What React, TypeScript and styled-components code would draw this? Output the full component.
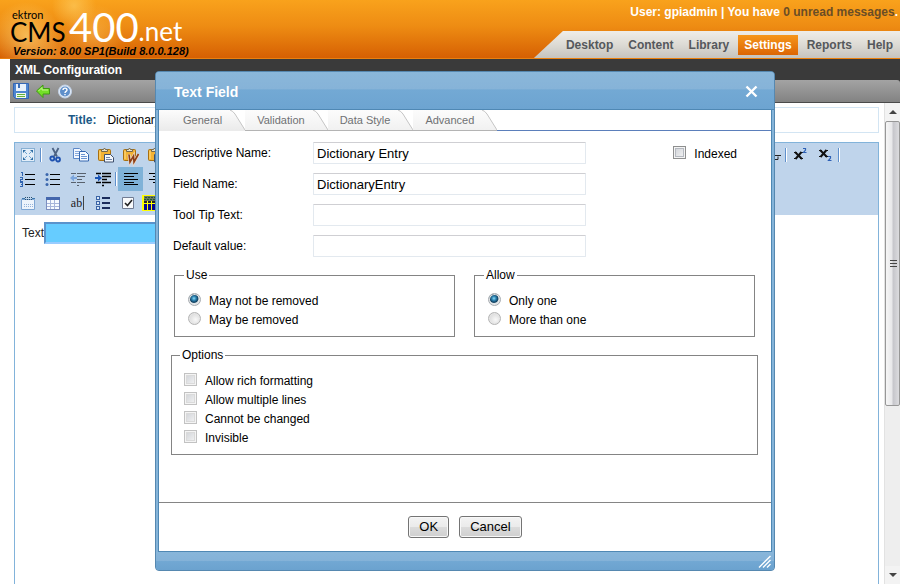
import React, { useState } from "react";
import styled, { createGlobalStyle, css } from "styled-components";

const GlobalStyle = createGlobalStyle`
  * { box-sizing: border-box; }
  body {
    margin: 0;
    background: #fff;
    color: #000;
    font: 12px/16px "Liberation Sans", Arial, sans-serif;
    overflow: hidden;
  }
  button, input { font-family: inherit; }
`;

/* ---------- page frame ---------- */

const Page = styled.div`
  position: relative;
  display: flex;
  flex-direction: column;
  height: 100vh;
`;

const Banner = styled.header`
  display: flex;
  justify-content: space-between;
  height: 59px;
  flex: none;
  border-bottom: 1px solid #ea800e;
  background:
    radial-gradient(circle at 26px 36px, rgba(255, 222, 130, 0.6), transparent 34px),
    radial-gradient(circle at 74px 6px, rgba(255, 214, 110, 0.55), transparent 22px),
    radial-gradient(circle at 94px 34px, rgba(255, 205, 110, 0.4), transparent 30px),
    radial-gradient(circle at 50px 60px, rgba(255, 190, 90, 0.4), transparent 36px),
    linear-gradient(#f9a21c, #ee8c13 45%, #d66003);
`;

const Brand = styled.div`
  display: flex;
  flex-direction: column;
  padding: 10px 0 0 10px;
`;

const Wordmark = styled.div`
  display: flex;
  align-items: flex-end;
  height: 34px;
  font-family: Lato, "Liberation Sans", sans-serif;
`;

const BrandStack = styled.div`
  display: flex;
  flex-direction: column;
  width: 59px;
`;

const Maker = styled.span`
  padding-left: 2px;
  font-size: 11px;
  line-height: 11px;
`;

const Product = styled.span`
  font-size: 26px;
  line-height: 24px;
`;

const Edition = styled.span`
  color: #fff;
  font-size: 40px;
  font-weight: 400;
  line-height: 34px;
`;

const Suffix = styled.span`
  color: #fff;
  font-size: 26px;
  font-weight: 400;
  line-height: 26px;
`;

const Version = styled.div`
  padding-left: 3px;
  font-size: 11px;
  font-style: italic;
  font-weight: bold;
  line-height: 14px;
`;

const Account = styled.div`
  display: flex;
  flex-direction: column;
  justify-content: space-between;
  align-items: flex-end;
`;

const UserLine = styled.div`
  padding: 4px 2px 0 0;
  color: #fff;
  font-weight: bold;
`;

const UnreadLink = styled.a`
  color: #6a4d26;
  text-decoration: none;
`;

const Nav = styled.nav`
  display: flex;
  align-items: center;
  gap: 3px;
  height: 27px;
  padding: 0 1px 0 26px;
  background: linear-gradient(#efede8, #dddbd5 50%, #c5c3be);
  clip-path: polygon(29px 0, 100% 0, 100% 100%, 0 100%);
`;

const NavLink = styled.a<{ $active?: boolean }>`
  padding: 2px 6px;
  color: #55585c;
  font-weight: bold;
  text-decoration: none;
  ${(p) =>
    p.$active &&
    css`
      background: linear-gradient(#f6961a, #dc6504);
      color: #fff;
    `}
`;

const Workspace = styled.main`
  display: flex;
  flex-direction: column;
  flex: 1;
  min-height: 0;
  margin-left: 10px;
`;

const PageTitle = styled.h1`
  margin: 0;
  padding: 3px 5px 2px;
  background: #3a3a3a;
  color: #fff;
  font-size: 12px;
  line-height: 16px;
`;

const ActionStrip = styled.div`
  background: #3a3a3a;
`;

const ActionBar = styled.div`
  display: flex;
  align-items: center;
  gap: 6px;
  height: 23px;
  padding-left: 3px;
  border-bottom: 1px solid #4a4a4a;
  border-radius: 3px 3px 0 0;
  background: linear-gradient(#a3a3a3, #828282);
`;

const IconButton = styled.button<{ $pressed?: boolean }>`
  display: flex;
  align-items: center;
  justify-content: center;
  width: 25px;
  height: 24px;
  padding: 0;
  border: 0;
  background: ${(p) => (p.$pressed ? "#7fb2d8" : "none")};
`;

const ActionButton = styled(IconButton)`
  width: 16px;
  height: 18px;
`;

const Glyph = styled.svg`
  display: block;
  width: 16px;
  height: 16px;
  overflow: visible;
`;

const Stage = styled.div`
  display: flex;
  flex: 1;
  min-height: 0;
`;

const Document = styled.div`
  display: flex;
  flex-direction: column;
  flex: 1;
  gap: 9px;
  padding: 4px 5px 0 4px;
`;

const TitleRow = styled.label`
  display: flex;
  align-items: center;
  gap: 11px;
  height: 26px;
  padding-left: 53px;
  border: 1px solid #d3e5f3;
`;

const TitleCaption = styled.span`
  color: #1d5987;
  font-weight: bold;
`;

const TitleInput = styled.input`
  flex: 1;
  padding: 0;
  border: 0;
  background: none;
  font-size: 12px;
`;

const Editor = styled.section`
  flex: 1;
  border: 1px solid #82b3da;
  border-bottom: 0;
`;

const ToolPanel = styled.div`
  background: #bfd4eb;
`;

const ToolRow = styled.div`
  display: flex;
  justify-content: space-between;
  height: 24px;
`;

const ToolGroup = styled.div<{ $end?: boolean }>`
  display: flex;
  align-items: center;
  padding-right: ${(p) => (p.$end ? 37 : 0)}px;
`;

const Divider = styled.span`
  width: 2px;
  height: 14px;
  margin-right: 1px;
  border-left: 1px solid #5f90cc;
  border-right: 1px solid #fff;
`;

const Canvas = styled.label`
  display: flex;
  align-items: center;
  padding: 7px 0 0 7px;
  color: #222;
`;

const FieldMark = styled.input`
  width: 200px;
  height: 22px;
  border: 2px solid #5a93cc;
  border-bottom-color: #99ccff;
  background: #66ccff;
`;

/* ---------- scroll rail ---------- */

const Rail = styled.div`
  display: flex;
  flex-direction: column;
  width: 16px;
  background: #eee;
  border-left: 1px solid #e2e2e2;
`;

const RailArrow = styled.button`
  display: flex;
  align-items: center;
  justify-content: center;
  height: 18px;
  flex: none;
  padding: 0;
  border: 0;
  background: #f3f3f3;
`;

const RailTrack = styled.div`
  flex: 1;
`;

const RailThumb = styled.div`
  display: flex;
  align-items: center;
  justify-content: center;
  height: 64%;
  border: 1px solid #979797;
  border-radius: 2px;
  background: linear-gradient(90deg, #f6f6f6, #e8e8ea 45%, #c6c6cb 55%, #dcdcdf);
`;

/* ---------- dialog ---------- */

const Dialog = styled.section`
  position: absolute;
  top: 71px;
  left: 155px;
  right: 125px;
  border: 1px solid #5688b0;
  border-radius: 4px;
  background: #85b4d9;
  overflow: hidden;
`;

const DialogHead = styled.header`
  display: flex;
  align-items: center;
  justify-content: space-between;
  height: 38px;
  padding: 2px 16px 0 18px;
  border-bottom: 1px solid #4f88b4;
  background: linear-gradient(#8ab7da, #86b3d8 46%, #73a9d4 48%, #6da4d1);
`;

const DialogTitle = styled.h2`
  margin: 0;
  color: #fff;
  font-size: 14px;
  line-height: 18px;
`;

const CloseButton = styled.button`
  display: flex;
  padding: 0;
  border: 0;
  background: none;
`;

const DialogBody = styled.div`
  margin: 0 2px;
  border: solid #4f88b4;
  border-width: 0 1px 1px;
  background: #fff;
`;

const DialogFoot = styled.footer`
  display: flex;
  justify-content: flex-end;
  height: 18px;
  padding: 3px 3px 0 0;
  background: linear-gradient(#88b6da, #84b2d8 48%, #72a8d3 50%, #6ba2cf);
`;

const Tabs = styled.div`
  display: flex;
  border-bottom: 1px solid #5b7fbb;
`;

const Tab = styled.button<{ $active?: boolean }>`
  display: flex;
  align-items: center;
  gap: 7px;
  height: 21px;
  margin-bottom: -1px;
  padding: 0 0 0 ${(p) => (p.$active ? 24 : 12)}px;
  border: 0;
  border-bottom: 1px solid ${(p) => (p.$active ? "#ebebeb" : "#b4b4b4")};
  background: linear-gradient(#fcfcfc, ${(p) => (p.$active ? "#ebebeb" : "#f1f1f1")});
  color: #6f7173;
  font-size: 11px;
  line-height: 20px;
`;

const TabEdge = styled.svg`
  display: block;
  width: 16px;
  height: 20px;
`;

const Form = styled.form`
  display: flex;
  flex-direction: column;
`;

const Fields = styled.div`
  display: grid;
  grid-template-columns: 140px 273px 1fr;
  row-gap: 9px;
  align-items: center;
  padding: 11px 14px 0;
`;

const FieldLabel = styled.label`
  grid-column: 1;
`;

const TextInput = styled.input`
  grid-column: 2;
  width: 100%;
  height: 22px;
  padding: 1px 3px 0;
  border: 1px solid #e3e9ef;
  border-top-color: #cfcfd3;
  border-radius: 1px;
  font-size: 13px;
`;

const CheckLabel = styled.label`
  display: flex;
  align-items: center;
  gap: 8px;
  height: 19px;
`;

const IndexedSlot = styled.div`
  grid-column: 3;
  grid-row: 1;
  justify-self: end;
  padding: 2px 20px 0 0;
`;

const Check = styled.input<{ $strong?: boolean }>`
  appearance: none;
  width: 13px;
  height: 13px;
  margin: 0 0 3px;
  border: 1px solid ${(p) => (p.$strong ? "#8e8f8f" : "#c2c2c2")};
  background: linear-gradient(135deg, #cdd0d5, #f6f6f6);
  box-shadow: inset 0 0 0 1px #f4f4f4, inset 0 0 0 2px ${(p) => (p.$strong ? "#b5b9c0" : "#dadada")};

  &:checked { background: #33628c; }
`;

const Radio = styled.input`
  appearance: none;
  width: 13px;
  height: 13px;
  margin: 0 0 3px;
  border: 1px solid #b4b4b4;
  border-radius: 50%;
  background: radial-gradient(circle at 60% 60%, #f8f8f8, #cfcfcf);
  box-shadow: inset 0 0 0 1px #e6e6e6;

  &:checked {
    border-color: #a6abb0;
    background: radial-gradient(circle at 45% 40%, #8fdcf5 0, #2f86b5 2px, #10405f 4px, #dfe5e9 5px);
  }
`;

const GroupPair = styled.div`
  display: grid;
  grid-template-columns: 1fr 1fr;
  gap: 19px;
  padding: 10px 16px 0 15px;
`;

const Group = styled.fieldset`
  min-width: 0;
  margin: 0;
  padding: 8px 13px 7px;
  border: 1px solid #848484;
`;

const OptionsGroup = styled(Group)`
  margin: 10px 13px 0 12px;
  padding: 8px 12px 7px;
`;

const Legend = styled.legend`
  margin-left: -4px;
  padding: 0 2px;
`;

const Actions = styled.div`
  display: flex;
  justify-content: center;
  gap: 10px;
  margin-top: 47px;
  padding: 13px 0 13px;
  border-top: 1px solid #858585;
`;

const PushButton = styled.button`
  height: 22px;
  padding: 0 10px;
  border: 1px solid #747474;
  border-radius: 3px;
  background: linear-gradient(#f3f3f3, #ebebeb 48%, #dbdbdb 52%, #cfcfcf);
  box-shadow: inset 0 0 0 1px #f8f8f8;
  color: #000;
  font-size: 13px;
  line-height: 18px;
`;

/* ---------- drawings ---------- */

const SaveIcon = () => (
  <Glyph viewBox="0 0 16 16">
    <path d="M.5.5h15v15H2.500l-2-2z" fill="#4f86d0" stroke="#3567b4" />
    <path d="M3 1h10v7H3z" fill="#e8f1fb" />
    <path d="M5 1h2v4H5z" fill="#3c6eb8" />
    <path d="M3 10h10v5H3z" fill="#f4f8ee" />
    <path d="M4 11.500h8M4 13.500h8" stroke="#64b23c" />
  </Glyph>
);

const BackIcon = () => (
  <Glyph viewBox="0 0 16 16">
    <path d="M1.500 8l6.500-6v3.500h6.500v5.500H8v3.500z" fill="#74e028" stroke="#3f9a12" strokeLinejoin="round" />
    <path d="M3.500 8l3.500-3.500v2.500h6" fill="none" stroke="#c4f78e" />
  </Glyph>
);

const HelpIcon = () => (
  <Glyph viewBox="0 0 16 16">
    <circle cx="8" cy="8.500" r="6.500" fill="#dfe9f6" stroke="#c3d3e8" />
    <circle cx="8" cy="8.500" r="5" fill="#5f8fca" />
    <path d="M6 7c0-2.500 4-2.500 4 0 0 1.500-2 1.300-2 3M8 11v1.300" fill="none" stroke="#fff" strokeWidth="1.400" />
  </Glyph>
);

const FullScreenIcon = () => (
  <Glyph viewBox="0 0 16 16">
    <rect x="1.500" y="1.500" width="13" height="13" fill="#e3eef9" stroke="#3f7fb5" strokeDasharray="1 1" />
    <path d="M3 6V3h3zM10 3h3v3zM3 10v3h3zM13 10v3h-3z" fill="#2f6ea6" />
    <path d="M5 5l2 2M11 5L9 7M5 11l2-2M11 11L9 9" stroke="#6fa4cf" />
  </Glyph>
);

const CutIcon = () => (
  <Glyph viewBox="0 0 16 16">
    <path d="M4.500 1l4.500 8.500M10.500 1L6 9.500" stroke="#4d6384" strokeWidth="1.800" />
    <circle cx="4.300" cy="11.500" r="2" fill="none" stroke="#1f52b0" strokeWidth="1.800" />
    <circle cx="10" cy="12.500" r="2" fill="none" stroke="#1f52b0" strokeWidth="1.800" />
  </Glyph>
);

const CopyIcon = () => (
  <Glyph viewBox="0 0 16 16">
    <path d="M.5 1.500h6l2.500 2.500v7.500H.5z" fill="#f3f8ff" stroke="#5d88c8" />
    <path d="M2 4.500h4M2 6.500h4M2 8.500h4" stroke="#86a9dc" />
    <path d="M6.500 4.500h6l3 3v6.500h-9z" fill="#f8fbff" stroke="#3466b0" />
    <path d="M8 7.500h4M8 9.500h6M8 11.500h6" stroke="#6b94d2" />
  </Glyph>
);

const Clipboard = () => (
  <>
    <rect x=".5" y="2.500" width="12" height="11" rx="1" fill="#f2b233" stroke="#a8700f" />
    <path d="M2 4v8" stroke="#ffdf8a" />
    <path d="M3.500 4.500v-2h2l1-1.500 1 1.500h2v2z" fill="#e8e3cc" stroke="#76684a" />
  </>
);

const PasteIcon = () => (
  <Glyph viewBox="0 0 16 16">
    <Clipboard />
    <path d="M6.500 7.500h6l3 3v4.500h-9z" fill="#f4f8fd" stroke="#3f4f6c" />
    <path d="M8 10.500h4M8 12.500h6" stroke="#7285aa" />
  </Glyph>
);

const PasteWordIcon = () => (
  <Glyph viewBox="0 0 16 16">
    <Clipboard />
    <path d="M6 7.500L7 15l3.500-6 .5 6 4.500-8" fill="none" stroke="#ecd9c4" strokeWidth="3" />
    <path d="M6 7.500L7 15l3.500-6 .5 6 4.500-8" fill="none" stroke="#8d3f16" strokeWidth="1.600" />
  </Glyph>
);

const OrderedListIcon = () => (
  <Glyph viewBox="0 0 16 16" shapeRendering="crispEdges">
    <path d="M1 1.500h1.500V5M0 6.500h2.500v1.500H.5v2H3M0 11.500h2.500v3.500H0M1 13.500h1" fill="none" stroke="#2e63b0" />
    <path d="M5 3.500h10M5 8.500h10M5 13.500h10" stroke="#000" />
  </Glyph>
);

const BulletListIcon = () => (
  <Glyph viewBox="0 0 16 16">
    <circle cx="2" cy="3.500" r="1.500" fill="#3b67ad" />
    <circle cx="2" cy="8.500" r="1.500" fill="#3b67ad" />
    <circle cx="2" cy="13.500" r="1.500" fill="#3b67ad" />
    <path d="M5 3.500h10M5 8.500h10M5 13.500h10" stroke="#000" />
  </Glyph>
);

const OutdentIcon = () => (
  <Glyph viewBox="0 0 16 16">
    <path d="M1 2.500h5M7 2.500h9M7 5.500h8M7 8.500h5M7 11.500h8M1 11.500h5M7 14.500h2" stroke="#58616d" />
    <path d="M0 7l4-3.500V6h3v2H4v2.500z" fill="#7ba5dc" />
  </Glyph>
);

const IndentIcon = () => (
  <Glyph viewBox="0 0 16 16">
    <path d="M1 2.500h5M7 2.500h9M7 5.500h9M7 8.500h5M7 11.500h9M1 11.500h5M7 14.500h2" stroke="#000" strokeWidth="1.300" />
    <path d="M7 7L3 3.500V6H0v2h3v2.500z" fill="#1c55b5" />
  </Glyph>
);

const AlignIcon = ({ right }: { right?: boolean }) => (
  <Glyph viewBox="0 0 16 16" shapeRendering="crispEdges">
    <path
      d={right ? "M1 2.500h14M5 5.500h10M1 8.500h14M5 11.500h10" : "M1 2.500h14M1 5.500h10M1 8.500h14M1 11.500h10M1 13.500h14"}
      stroke="#000"
    />
  </Glyph>
);

const CalendarIcon = () => (
  <Glyph viewBox="0 0 16 16">
    <path d="M1.500 4.500h13v10h-13z" fill="#edf4fc" stroke="#7ea6d4" />
    <path d="M2 3.500h3M12 3.500h3" stroke="#3f79ad" />
    <path d="M5 2.500h7M5 4.500h7" stroke="#27506f" strokeDasharray="1 1" />
    <path d="M4 9.500h9M4 11.500h9" stroke="#94b3da" strokeDasharray="1 1" />
  </Glyph>
);

const TableIcon = () => (
  <Glyph viewBox="0 0 16 16" shapeRendering="crispEdges">
    <path d="M1.500 2.500h13v12h-13z" fill="#f6faff" stroke="#7d8fc0" />
    <path d="M1 2h14v3H1z" fill="#4467ad" />
    <path d="M2 8.500h12M2 11.500h12M5.500 5v9M9.500 5v9" stroke="#a7b5da" />
  </Glyph>
);

const TextBoxMark = styled.span`
  padding-right: 1px;
  border-right: 1px solid #444;
  color: #222;
  font: 12px/14px "Liberation Serif", serif;
`;

const CheckListIcon = () => (
  <Glyph viewBox="0 0 16 16" shapeRendering="crispEdges">
    <path d="M1.500 1.500h3v3h-3zM1.500 6.500h3v3h-3zM1.500 11.500h3v3h-3z" fill="#d9e8f8" stroke="#3b64a6" />
    <path d="M7 3h8M7 8h8M7 13h8" stroke="#1b2d5c" strokeWidth="2" />
  </Glyph>
);

const CheckBoxIcon = () => (
  <Glyph viewBox="0 0 16 16">
    <path d="M2.500 2.500h11v11h-11z" fill="#f8fafc" stroke="#717c93" />
    <path d="M5 8l2.500 2.500L12 5" fill="none" stroke="#222" strokeWidth="1.600" />
  </Glyph>
);

const ResourceIcon = () => (
  <Glyph viewBox="0 0 16 16" shapeRendering="crispEdges">
    <path d="M-3 0h19v16H-3z" fill="#ff0" />
    <path d="M-1 1h16v5H-1z" fill="#6b7366" />
    <path d="M0 2.500h15M-1 4.500h15" stroke="#1f5f2a" strokeDasharray="2 1" />
    <path d="M-1 7h16" stroke="#222" strokeWidth="2" strokeDasharray="3 1" />
    <path d="M-1 9h3v6h-3zM3 9h3v6H3zM7 9h3v6H7zM11 9h4v6h-4z" fill="#050590" />
  </Glyph>
);

const StrikeIcon = () => (
  <Glyph viewBox="0 0 16 16">
    <path d="M3 8.500h13M9 3v3M9 12.500h4v-3" fill="none" stroke="#222" />
  </Glyph>
);

const ScriptIcon = ({ low }: { low?: boolean }) => (
  <Glyph viewBox="0 0 16 16">
    <path d={low ? "M2 3l7 7M8.500 3l-6 7" : "M2 5l7 7M8.500 5l-6 7"} stroke="#111" strokeWidth="2" />
    <path
      d={low ? "M1 3.500h3M7 3.500h3M1 9.500h3M7 9.500h3" : "M1 5.500h3M7 5.500h3M1 11.500h3M7 11.500h3"}
      stroke="#111"
    />
    <path
      d={low ? "M10 9.500h2.500v1.500l-2 2.500H13.500" : "M10 1.500h2.500V3l-2 2.500H13.500"}
      fill="none"
      stroke="#2c5fb5"
      strokeWidth="1.200"
    />
  </Glyph>
);

const Tool = ({ name, pressed, children }: { name: string; pressed?: boolean; children: React.ReactNode }) => (
  <IconButton type="button" aria-label={name} $pressed={pressed}>
    {children}
  </IconButton>
);

const tabNames = ["General", "Validation", "Data Style", "Advanced"];
const options = ["Allow rich formatting", "Allow multiple lines", "Cannot be changed", "Invisible"];
const navItems = ["Desktop", "Content", "Library", "Settings", "Reports", "Help"];

const RadioGroup = ({ legend, items }: { legend: string; items: string[] }) => (
  <Group>
    <Legend>{legend}</Legend>
    {items.map((item, i) => (
      <CheckLabel key={item}>
        <Radio type="radio" name={legend} defaultChecked={i === 0} />
        {item}
      </CheckLabel>
    ))}
  </Group>
);

const fields = [
  { label: "Descriptive Name:", value: "Dictionary Entry" },
  { label: "Field Name:", value: "DictionaryEntry" },
  { label: "Tool Tip Text:", value: "" },
  { label: "Default value:", value: "" },
];

export default function App() {
  const [tab, setTab] = useState("General");

  return (
    <Page>
      <GlobalStyle />
      <Banner>
        <Brand>
          <Wordmark>
            <BrandStack>
              <Maker>ektron</Maker>
              <Product>CMS</Product>
            </BrandStack>
            <Edition>400</Edition>
            <Suffix>.net</Suffix>
          </Wordmark>
          <Version>Version: 8.00 SP1(Build 8.0.0.128)</Version>
        </Brand>
        <Account>
          <UserLine>
            User: gpiadmin | You have <UnreadLink href="#messages">0 unread messages</UnreadLink>.
          </UserLine>
          <Nav>
            {navItems.map((item) => (
              <NavLink key={item} href={`#${item}`} $active={item === "Settings"}>
                {item}
              </NavLink>
            ))}
          </Nav>
        </Account>
      </Banner>

      <Workspace>
        <PageTitle>XML Configuration</PageTitle>
        <ActionStrip>
          <ActionBar>
            <ActionButton type="button" aria-label="Save"><SaveIcon /></ActionButton>
            <ActionButton type="button" aria-label="Back"><BackIcon /></ActionButton>
            <ActionButton type="button" aria-label="Help"><HelpIcon /></ActionButton>
          </ActionBar>
        </ActionStrip>
        <Stage>
          <Document>
            <TitleRow>
              <TitleCaption>Title:</TitleCaption>
              <TitleInput defaultValue="Dictionary" />
            </TitleRow>
            <Editor>
              <ToolPanel>
                <ToolRow>
                  <ToolGroup>
                    <Tool name="Full screen"><FullScreenIcon /></Tool>
                    <Divider />
                    <Tool name="Cut"><CutIcon /></Tool>
                    <Tool name="Copy"><CopyIcon /></Tool>
                    <Tool name="Paste"><PasteIcon /></Tool>
                    <Tool name="Paste from Word"><PasteWordIcon /></Tool>
                    <Tool name="Paste plain"><PasteIcon /></Tool>
                  </ToolGroup>
                  <ToolGroup $end>
                    <Tool name="Strikethrough"><StrikeIcon /></Tool>
                    <Divider />
                    <Tool name="Superscript"><ScriptIcon /></Tool>
                    <Tool name="Subscript"><ScriptIcon low /></Tool>
                    <Divider />
                  </ToolGroup>
                </ToolRow>
                <ToolRow>
                  <ToolGroup>
                    <Tool name="Numbered list"><OrderedListIcon /></Tool>
                    <Tool name="Bulleted list"><BulletListIcon /></Tool>
                    <Tool name="Outdent"><OutdentIcon /></Tool>
                    <Tool name="Indent"><IndentIcon /></Tool>
                    <Divider />
                    <Tool name="Align left" pressed><AlignIcon /></Tool>
                    <Tool name="Align right"><AlignIcon right /></Tool>
                  </ToolGroup>
                </ToolRow>
                <ToolRow>
                  <ToolGroup>
                    <Tool name="Calendar"><CalendarIcon /></Tool>
                    <Tool name="Table"><TableIcon /></Tool>
                    <Tool name="Text field"><TextBoxMark>ab</TextBoxMark></Tool>
                    <Tool name="Choices"><CheckListIcon /></Tool>
                    <Tool name="Check box"><CheckBoxIcon /></Tool>
                    <Tool name="Resource"><ResourceIcon /></Tool>
                  </ToolGroup>
                </ToolRow>
              </ToolPanel>
              <Canvas>
                Text
                <FieldMark />
              </Canvas>
            </Editor>
          </Document>
          <Rail>
            <RailArrow type="button" aria-label="Scroll up">
              <svg width="8" height="4"><path d="M4 0l4 4H0z" fill="#444" /></svg>
            </RailArrow>
            <RailTrack>
              <RailThumb>
                <svg width="8" height="8"><path d="M1 1.500h7M1 4.500h7M1 7.500h7" stroke="#444" /></svg>
              </RailThumb>
            </RailTrack>
            <RailArrow type="button" aria-label="Scroll down">
              <svg width="8" height="4"><path d="M0 0h8L4 4z" fill="#444" /></svg>
            </RailArrow>
          </Rail>
        </Stage>
      </Workspace>

      <Dialog role="dialog" aria-labelledby="dialog-title">
        <DialogHead>
          <DialogTitle id="dialog-title">Text Field</DialogTitle>
          <CloseButton type="button" aria-label="Close">
            <svg width="13" height="13"><path d="M1.500 1.500l10 10M11.500 1.500l-10 10" stroke="#fff" strokeWidth="2.400" /></svg>
          </CloseButton>
        </DialogHead>
        <DialogBody>
          <Tabs role="tablist">
            {tabNames.map((name) => (
              <Tab key={name} role="tab" type="button" aria-selected={tab === name} $active={tab === name} onClick={() => setTab(name)}>
                {name}
                <TabEdge viewBox="0 0 16 20">
                  <path d="M0 0h1q3 1 5 4l10 16V0z" fill="#fff" />
                  <path d="M1 0q3 1 5 4l10 16" fill="none" stroke="#c4c4c4" />
                </TabEdge>
              </Tab>
            ))}
          </Tabs>
          <Form onSubmit={(e) => e.preventDefault()}>
            <Fields>
              {fields.map((field, i) => (
                <React.Fragment key={field.label}>
                  <FieldLabel htmlFor={`field-${i}`}>{field.label}</FieldLabel>
                  <TextInput id={`field-${i}`} defaultValue={field.value} />
                </React.Fragment>
              ))}
              <IndexedSlot>
                <CheckLabel>
                  <Check type="checkbox" $strong />
                  Indexed
                </CheckLabel>
              </IndexedSlot>
            </Fields>
            <GroupPair>
              <RadioGroup legend="Use" items={["May not be removed", "May be removed"]} />
              <RadioGroup legend="Allow" items={["Only one", "More than one"]} />
            </GroupPair>
            <OptionsGroup>
              <Legend>Options</Legend>
              {options.map((option) => (
                <CheckLabel key={option}>
                  <Check type="checkbox" />
                  {option}
                </CheckLabel>
              ))}
            </OptionsGroup>
            <Actions>
              <PushButton type="submit">OK</PushButton>
              <PushButton type="button">Cancel</PushButton>
            </Actions>
          </Form>
        </DialogBody>
        <DialogFoot>
          <svg width="13" height="13"><path d="M1 12.500L12.500 1M5 12.500L12.500 5M9 12.500l3.500-3.500" stroke="#fff" strokeWidth="1.400" /></svg>
        </DialogFoot>
      </Dialog>
    </Page>
  );
}
